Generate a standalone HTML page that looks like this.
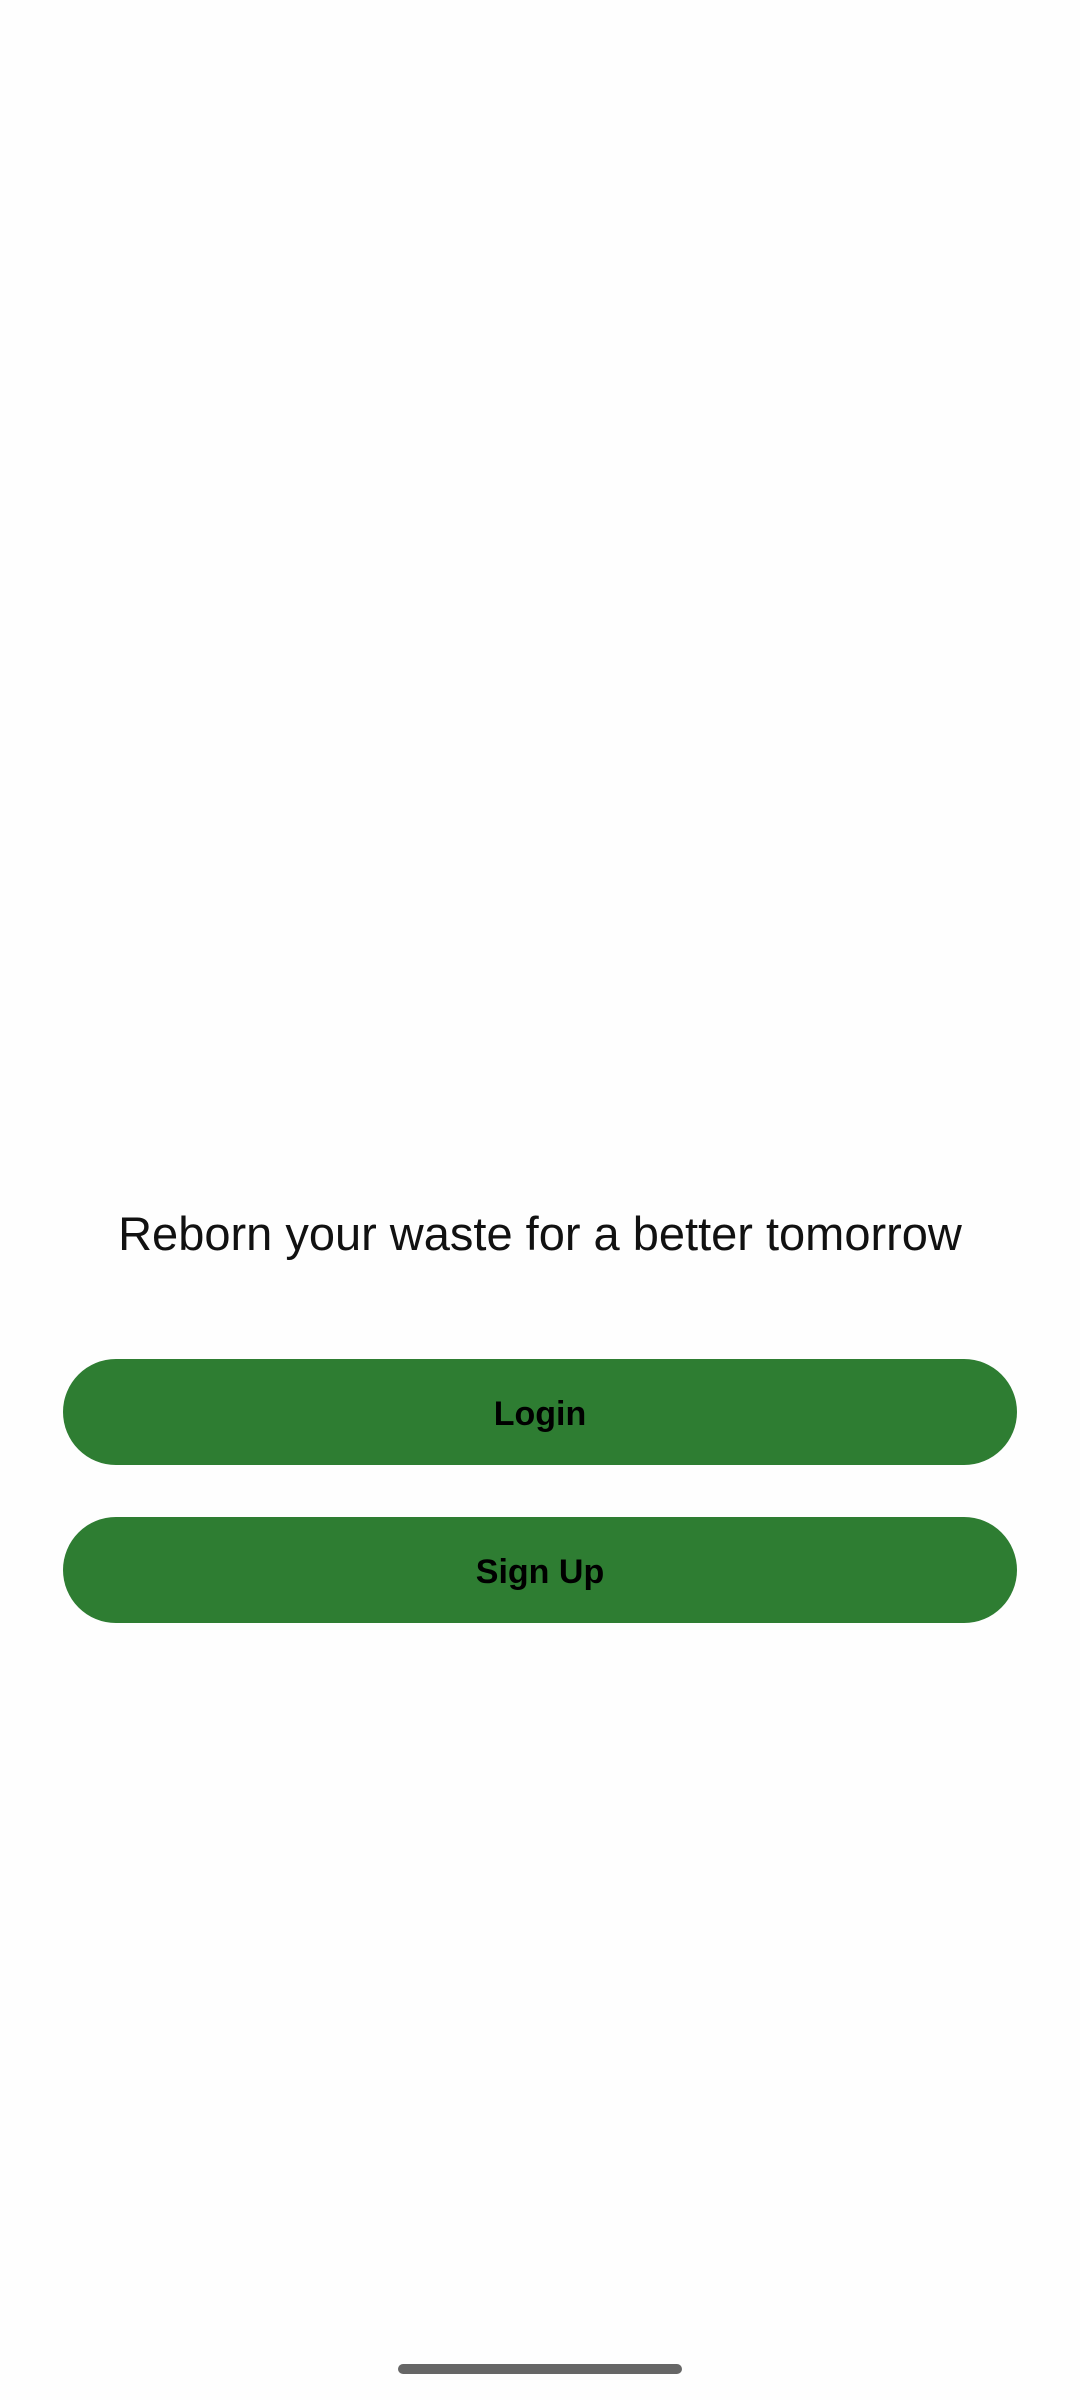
<!DOCTYPE html>
<html><head><meta charset="utf-8"><style>
html,body{margin:0;padding:0;background:#fefefe;}
body{width:1080px;height:2400px;position:relative;overflow:hidden;font-family:"Liberation Sans",sans-serif;}
.t{position:absolute;left:0;width:1080px;top:1204px;text-align:center;font-size:47px;color:#111;line-height:60px;}
.b{position:absolute;left:63px;width:954px;height:106px;border-radius:53px;background:#2e7d32;color:#000;font-size:34px;font-weight:bold;text-align:center;line-height:110px;}
.h{position:absolute;left:398px;top:2364px;width:284px;height:10px;border-radius:5px;background:#666;}
</style></head><body>
<div class="t">Reborn your waste for a better tomorrow</div>
<div class="b" style="top:1359px">Login</div>
<div class="b" style="top:1517px">Sign Up</div>
<div class="h"></div>
</body></html>
